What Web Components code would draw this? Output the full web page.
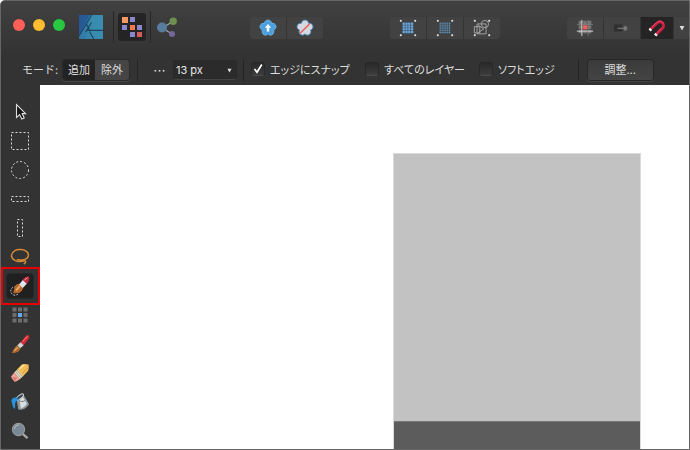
<!DOCTYPE html>
<html lang="ja">
<head>
<meta charset="utf-8">
<title>Affinity Designer</title>
<style>
html, body { margin: 0; height: 100%; background: #fff; }
body { font-family: Inter, "Liberation Sans", "Noto Sans CJK JP", sans-serif; font-size: 11px; line-height: 16px; color: #dedede; }
</style>
</head>
<body>
<app-window></app-window>
<script>
const css = t => `<style>*,:host{box-sizing:border-box}button{font:inherit;color:inherit;padding:0;margin:0;border:0;background:none}${t}</style>`;
const define = (name, html, setup) => customElements.define(name, class extends HTMLElement {
  constructor() { super(); this.attachShadow({ mode: 'open' }).innerHTML = html; }
  connectedCallback() { if (setup) setup(this, this.shadowRoot); }
});

const grid = (n, x, y, s, p, fill) => {
  let o = '';
  for (let r = 0; r < n; r++) for (let c = 0; c < n; c++) o += `<rect x="${x + c * p}" y="${y + r * p}" width="${s}" height="${s}" fill="${fill}"/>`;
  return o;
};
const corners = [[2, 2], [18, 2], [2, 18], [18, 18]].map(([x, y]) => `<rect x="${x - 1}" y="${y - 1}" width="2" height="2" fill="#e8e4de"/>`).join('');
const flower = 'M10 1.2C12.5 1.2 13.8 3 14 4.8C16 4.4 18.4 5.6 18.8 7.8C19.2 10 17.9 11.6 16.2 12.1C17 14 16.4 16.4 14.4 17.5C12.6 18.4 11.1 17.8 10 16.5C8.9 17.8 7.4 18.4 5.6 17.5C3.6 16.4 3 14 3.8 12.1C2.1 11.6 .8 10 1.2 7.8C1.6 5.6 4 4.4 6 4.8C6.2 3 7.5 1.2 10 1.2Z';
const dash = 'fill="none" stroke="#dcdcdc" stroke-width="1" stroke-dasharray="2 2"';

const ICONS = {
  app: `<defs><linearGradient id="a" x1="0" x2="1"><stop stop-color="#28609a"/><stop offset=".5" stop-color="#3180a6"/><stop offset="1" stop-color="#3787ad"/></linearGradient></defs><rect width="20" height="20" rx=".6" fill="url(#a)"/><path d="M10 0L0 17V20H20V0Z" fill="#4199b8" opacity=".4"/><path d="M0 0H9L0 16Z" fill="#235391" opacity=".7"/><path d="M10.5 0L0 17.5M6 7.3L8.8 12.4M12.2 20L8.8 13.8M20 12.8H6.4L10.4 6.2M6.4 12.8L5.4 14.4" fill="none" stroke="#1d435d" stroke-width=".9"/>`,
  pixel: [[0,0,1],[1,0,0],[0,1,0],[1,1,2],[2,1,0],[1,2,0],[2,2,3]].map(([c,r,k]) => `<rect x="${c*7+(c?1:0)}" y="${r*7+(r?1:0)}" width="${k==1?6:5}" height="${k==1?6:5}" fill="${['#8987cd','#f69862','#f6784f','#d95b59'][k]}"/>`).join(''),
  exporter: `<path d="M5 11L16 4.5M5 11L15 17" stroke="#a9a9a9" stroke-width="1.1"/><circle cx="5" cy="10.5" r="5" fill="#567d9e"/><circle cx="16.2" cy="4.2" r="3.7" fill="#6d904f"/><circle cx="15" cy="17" r="3" fill="#746899"/>`,
  flower: `<path d="${flower}" fill="#4ba0df" stroke="#71b9e9"/><path d="M10 5.5L6.4 9.6H8.6V14H11.4V9.6H13.6Z" fill="#fff"/>`,
  flowerOff: `<path d="${flower}" fill="#d7d8df" stroke="#4589bd"/><path d="M4.6 15.8L15 5.6" stroke="#e55a5a" stroke-width="1.6"/>`,
  gridBig: grid(4, 4, 4, 2.5, 3.1, '#64ade9') + corners,
  gridSmall: grid(6, 4, 4, 1.3, 2.1, '#64a4d7') + corners,
  shapes: `<g fill="none" stroke="#aaa" stroke-width="1"><path d="M4.5 5.5H14.5V16.5H4.5ZM1.5 8.5H7.5V15.5H1.5ZM6 7L12 11L6 15"/><circle cx="13.3" cy="5.6" r="4"/></g>` + corners,
  snapgrid: grid(3, 3, 2, 4, 5, '#777') + `<rect x="8" y="7" width="4.5" height="4.5" fill="#ff5c57"/><path d="M6.5 1V19M1 13.5H19" stroke="#dedede" stroke-width="1"/><path d="M13.3 1V19M1 6H19" stroke="#999" stroke-width=".6"/>`,
  move: `<rect x="1" y="6" width="9" height="8" fill="#303030"/><rect x="12" y="8" width="4" height="5" fill="#606060"/><path d="M5 10.3H15M12.5 8L15.2 10.3L12.5 12.6" fill="none" stroke="#8b8b8b"/>`,
  magnet: `<path d="M3.2 11.2L9.8 4.8C14.5 .6 20.2 6.2 15.6 10.8L9.2 17" fill="none" stroke="#cf2043" stroke-width="3.2"/><path d="M4 9.2L9.6 3.8C12.6 1.5 16 2.2 17 5.2M10.4 14.6L15 10" fill="none" stroke="#ee6880" stroke-width=".7"/><path d="M3.5 10.9L1.7 12.6M9.6 16.6L7.9 18.3" stroke="#eee" stroke-width="3.4"/>`,
  down: `<path d="M4 5H16L10 16Z" fill="#dedede"/>`,
  more: `<g fill="#d8d8d8"><rect x="1" y="9" width="3" height="3"/><rect x="8.5" y="9" width="3" height="3"/><rect x="16" y="9" width="3" height="3"/></g>`,
  arrow: `<path d="M6.5 2.5V15.5L9.6 12.6L11.8 17L14.2 15.9L12.2 11.6H15.6Z" fill="#171717" stroke="#ddd" stroke-width="1.1"/>`,
  rect: `<rect x="1.5" y="1.5" width="17" height="17" ${dash}/>`,
  ellipse: `<circle cx="10" cy="10" r="8.5" ${dash}/>`,
  row: `<rect x="1.5" y="7.5" width="17" height="5" ${dash}/>`,
  column: `<rect x="7.5" y="1.5" width="5" height="17" ${dash}/>`,
  lasso: `<path d="M13.5 14C7 15.6 1.2 12.6 1.5 8.4C1.8 4.6 6 2.1 11 2.6C16 3 19 5.6 18.3 8.9C17.6 12.6 12 13.9 7 12.4M13.5 14C16.3 13 16.4 15.6 13.8 17" fill="none" stroke="#d38a35" stroke-width="1.5"/>`,
  selbrush: `<circle cx="5" cy="15" r="4.2" fill="none" stroke="#ddd" stroke-dasharray="1.8 1.3"/><path d="M3 17C4.5 14.5 3.6 10.8 6.6 8.4C9.4 6.5 13.8 9.4 12.8 13C11.4 17 6.8 17.8 3 17Z" fill="#b9682a"/><path d="M6 14.5L10 10" stroke="#e6a560" stroke-width="2"/><path d="M9.2 8.4L13 3.8L17 7.6L12.8 12Z" fill="#dfe4ee"/><path d="M12.7 4C14 1.4 16.7.2 19 .6C19.8 3.5 18.6 6 16.9 7.7Z" fill="#c02a3c"/><path d="M14.5 4L17.5 1.8" stroke="#f4a9b1"/>`,
  pixelgrid: grid(3, 2.5, 2.5, 4, 5.5, '#6c6c6c') + `<rect x="8" y="8" width="4" height="4" fill="#62a9f4"/>`,
  brush: `<path d="M10.3 8.8L16.2 1.6C17.8 0 20.2 2 18.9 4.2L13.4 11.6Z" fill="#d92c35"/><path d="M12.5 7.6L17.4 2.2" stroke="#ff7b7a"/><path d="M7.2 11.6L10.4 8.2L13.6 11.2L10 14.4Z" fill="#d2d4d8"/><path d="M1 18.8C4 17 3.4 13.2 7.1 11.4L10.4 14.2C9.6 18.2 5 19.3 1 18.8Z" fill="#a9672b"/><path d="M4 17L8 13.2" stroke="#e3a55c" stroke-width="1.3"/>`,
  eraser: `<path d="M7 6.5L11.8 1.5Q14.3.5 18.5 1.5Q19.4 5.5 18 8L13 13.2Z" fill="#f2bb58"/><path d="M9.5 6L14.3 1.8" stroke="#ffe5a0" stroke-width="1.4"/><path d="M12 10.5L18.3 4.5" stroke="#d9983a" stroke-width="1"/><path d="M4.2 9.5L7.5 6.2L13.2 13L9.8 16.2Z" fill="#e5dfc6"/><path d="M5.5 8.2L11 15M7 7L12.3 13.7" stroke="#968b70" stroke-width=".7"/><path d="M4.2 9.5L1.3 13.3Q1 15 4.3 18.4Q5.5 19.5 9.8 16.2Z" fill="#f0a296"/><path d="M2 14L7 14.5L5 18.2Z" fill="#e07a70"/>`,
  bucket: `<path d="M6.5 7L13 2L19 12C17 16.3 11.6 18.8 8.3 17.4Z" fill="#8e969b"/><path d="M9.5 8L13.2 5L16.8 11.8C15.5 14 13 16 10.8 16.4Z" fill="#d9dfe1"/><ellipse cx="9.9" cy="5" rx="4.4" ry="1.7" transform="rotate(-38 9.9 5)" fill="#374752" stroke="#ccd3d5"/><path d="M7.5 5.8C3.5 5 1.1 7 1.4 9.6C2.8 11.4 2 14.4 4.5 17C6 15 4.2 11.4 6 9.6L8 8.4Z" fill="#2794df"/><path d="M7.5 6C10 10 12 10.3 15 8.5" fill="none" stroke="#596269" stroke-width=".8"/>`,
  zoom: `<path d="M12.7 12.8L17.5 17.2" stroke="#a6a6a6" stroke-width="2.3"/><circle cx="8.5" cy="8.5" r="6.1" fill="#798894" stroke="#969a9c" stroke-width="1.1"/><path d="M4.3 8C4.5 5.4 6.5 4 9 4" fill="none" stroke="#b9c4cb"/>`
};

define('ui-icon', css(`:host{display:block;flex:none;width:20px;height:20px}svg{display:block;width:100%;height:100%;overflow:visible}`) + '<svg viewBox="0 0 20 20" aria-hidden="true"></svg>',
  (h, r) => { r.querySelector('svg').innerHTML = ICONS[h.getAttribute('name')]; });

define('icon-button', css(`:host{display:flex;width:36px;height:22px;background:#424242}
button{flex:1;display:flex;align-items:center;justify-content:center}
:host([active]){background:#242424;width:32px}
:host([tool]){width:26px;height:24px;background:none;border-radius:3px}
:host([tool][active]){background:#202020;box-shadow:0 0 0 1px #282828}
:host([persona]){width:28px;height:28px;background:none;border-radius:3px}
:host([persona][active]){background:#242424}
:host([narrow]){width:15px}`) + '<button type="button"><slot></slot></button>',
  (h, r) => r.querySelector('button').setAttribute('aria-label', h.getAttribute('label')));

define('button-group', css(`:host{display:flex;gap:1px;background:#343434;border-radius:3px;overflow:hidden}`) + '<slot></slot>');
define('bar-divider', css(`:host{display:block;width:1px;height:22px;background:#252525}:host([tall]){height:32px;background:#272727}`));

define('traffic-lights', css(`:host{display:flex;gap:8px}button{width:12px;height:12px;border-radius:50%}
.r{background:#ff5f57}.y{background:#febc2e}.g{background:#28c840}`) +
  '<button class="r" aria-label="閉じる"></button><button class="y" aria-label="しまう"></button><button class="g" aria-label="拡大"></button>');

define('app-header', css(`:host{display:flex;justify-content:space-between;align-items:center;height:54px;padding-left:12px;background:linear-gradient(#414141,#333)}
.left{display:flex;align-items:center;width:170px;margin-bottom:2px}
traffic-lights{margin-bottom:4px}
.app{width:24px;height:24px;margin:0 10px 0 14px}
.px{width:20px;height:20px}.persona{margin:0 4px}
.small{width:8px;height:8px}.mag{width:18px;height:18px}.exp{margin-left:2px}`) + `
<div class="left"><traffic-lights></traffic-lights><ui-icon class="app" name="app"></ui-icon><bar-divider tall></bar-divider>
<icon-button class="persona" persona active label="ピクセル"><ui-icon class="px" name="pixel"></ui-icon></icon-button><bar-divider tall></bar-divider>
<icon-button class="exp" persona label="書き出し"><ui-icon name="exporter"></ui-icon></icon-button></div>
<button-group><icon-button label="同期"><ui-icon class="mag" name="flower"></ui-icon></icon-button><icon-button label="同期解除"><ui-icon class="mag" name="flowerOff"></ui-icon></icon-button></button-group>
<button-group><icon-button label="大グリッド"><ui-icon class="mag" name="gridBig"></ui-icon></icon-button><icon-button label="小グリッド"><ui-icon class="mag" name="gridSmall"></ui-icon></icon-button><icon-button label="図形"><ui-icon class="mag" name="shapes"></ui-icon></icon-button></button-group>
<button-group><icon-button label="グリッドスナップ"><ui-icon class="mag" name="snapgrid"></ui-icon></icon-button><icon-button label="移動"><ui-icon class="mag" name="move"></ui-icon></icon-button><icon-button active label="スナップ"><ui-icon class="mag" name="magnet"></ui-icon></icon-button><icon-button narrow label="オプション"><ui-icon class="small" name="down"></ui-icon></icon-button></button-group>`);

define('check-option', css(`:host{display:block}label{display:flex;align-items:center;gap:5px;white-space:nowrap}
input{appearance:none;margin:0 0 2px;width:14px;height:14px;border-radius:3px;background:linear-gradient(#292929,#3d3d3d);border:1px solid #292929;border-bottom-color:#4a4a4a}
.box{display:grid}.box>*{grid-area:1/1}svg{width:14px;height:14px;pointer-events:none;visibility:hidden}input:checked+svg{visibility:visible}
.text{font-feature-settings:"palt"}`) +
  '<label><span class="box"><input type="checkbox"><svg viewBox="0 0 14 14"><path d="M3.5 7L6 10.2L10.8 2.5" fill="none" stroke="#fff" stroke-width="1.7"/></svg></span><span class="text"><slot></slot></span></label>',
  (h, r) => { r.querySelector('input').checked = h.hasAttribute('checked'); });

define('options-bar', css(`:host{display:flex;align-items:center;height:30px;padding-left:21px;background:#333;white-space:nowrap}
.mode{width:41px}
.seg{display:flex;border-radius:3px;overflow:hidden;box-shadow:0 0 0 1px #2a2a2a,0 1px 0 1px #484848;margin-right:8px}
.seg button{width:32px;height:20px}.seg button:first-child{background:#232323}.seg button:last-child{background:#454545;width:34px}
.more{width:11px;height:20px;margin:0 8px 0 16px;display:flex;align-items:center}.more ui-icon{width:11px;height:11px}
.size{display:grid;align-items:center;width:64px;margin-right:6px}.size>*{grid-area:1/1}
select{appearance:none;width:64px;height:20px;padding:0 2px;margin:0;border:1px solid #292929;border-bottom-color:#444;border-radius:3px;background:#2b2b2b;color:#e8e8e8;font:11px/16px Inter,"Liberation Sans",sans-serif}
.size ui-icon{width:7px;height:7px;justify-self:end;margin-right:4px;pointer-events:none}
.checks{display:flex;margin-left:7px}.checks check-option:not(:last-child){width:114px}
.adjust{width:65px;height:20px;margin-left:9px;border-radius:3px;background:linear-gradient(#3b3b3b,#444);box-shadow:0 0 0 1px #272727,0 1px 0 1px #454545}
.end{margin-left:23px}`) + `
<span class="mode">モード:</span><div class="seg"><button type="button" aria-pressed="true">追加</button><button type="button">除外</button></div><bar-divider></bar-divider>
<button class="more" type="button" aria-label="その他"><ui-icon name="more"></ui-icon></button>
<div class="size"><select aria-label="幅"><option>13 px</option></select><ui-icon name="down"></ui-icon></div><bar-divider></bar-divider>
<div class="checks"><check-option checked>エッジにスナップ</check-option><check-option>すべてのレイヤー</check-option><check-option>ソフトエッジ</check-option></div>
<bar-divider class="end"></bar-divider><button class="adjust" type="button">調整...</button>`);

define('tool-palette', css(`:host{display:flex;flex-direction:column;align-items:center;gap:5px;width:39px;padding:15px 1px 0 0;background:#333}
.callout{position:relative}.callout::after{content:"";position:absolute;inset:-7px -7px -7px -6px;border:2px solid #e60000;pointer-events:none}`) +
  [['arrow','移動'],['rect','長方形選択'],['ellipse','楕円選択'],['row','行選択'],['column','列選択'],['lasso','なげなわ'],['selbrush','選択ブラシ'],['pixelgrid','ピクセル'],['brush','ブラシ'],['eraser','消しゴム'],['bucket','塗りつぶし'],['zoom','ズーム']]
  .map(([n, l]) => `<icon-button tool ${n === 'selbrush' ? 'active class="callout"' : ''} label="${l}"><ui-icon name="${n}"></ui-icon></icon-button>`).join(''));

define('art-canvas', css(`:host{display:flex;flex:1;padding:68px 48px 0 353px;background:#fff}
.art{flex:1;display:flex;flex-direction:column;border:1px solid #dadada;border-bottom:0;background:#c2c2c2}
.base{flex:1;margin-top:267px;background:#5c5c5c;border-top:1px solid #777}`) + '<div class="art"><div class="base"></div></div>');

define('app-window', css(`:host{display:flex;flex-direction:column;height:100vh;border:1px solid #666;border-top-left-radius:5px;overflow:hidden;background:#333}
app-header,options-bar{flex:none}
.body{flex:1;display:flex;min-height:0}tool-palette{flex:none;overflow:hidden}`) + '<app-header></app-header><options-bar></options-bar><div class="body"><tool-palette></tool-palette><art-canvas></art-canvas></div>');
</script>
</body>
</html>
